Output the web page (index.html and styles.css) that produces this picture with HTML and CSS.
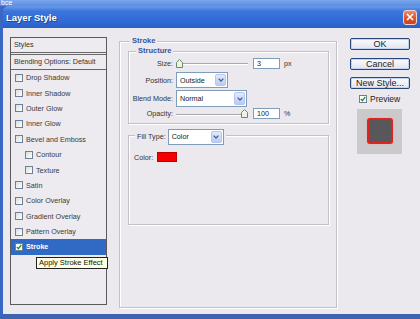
FILE: index.html
```html
<!DOCTYPE html>
<html lang="en">
<head>
    <meta charset="UTF-8">
    <title>Layer Style</title>
    <link rel="stylesheet" href="styles.css">
</head>
<body>
    <div class="desk">bce</div>
    <div class="window">
        <div class="titlebar">
            <span class="title">Layer Style</span>
            <span class="close">
                <svg width="8" height="8" viewBox="0 0 8 8"><path d="M1 1 L7 7 M7 1 L1 7" stroke="#fff" stroke-width="1.6"/></svg>
            </span>
        </div>
        <div class="client">
            <!-- styles list -->
            <div class="panel">
                <div class="panel-head">Styles</div>
                <div class="panel-blend">Blending Options: Default</div>
                <div class="item"><i class="cb"></i>Drop Shadow</div>
                <div class="item"><i class="cb"></i>Inner Shadow</div>
                <div class="item"><i class="cb"></i>Outer Glow</div>
                <div class="item"><i class="cb"></i>Inner Glow</div>
                <div class="item"><i class="cb"></i>Bevel and Emboss</div>
                <div class="item sub"><i class="cb"></i>Contour</div>
                <div class="item sub"><i class="cb"></i>Texture</div>
                <div class="item"><i class="cb"></i>Satin</div>
                <div class="item"><i class="cb"></i>Color Overlay</div>
                <div class="item"><i class="cb"></i>Gradient Overlay</div>
                <div class="item"><i class="cb"></i>Pattern Overlay</div>
                <div class="item active"><i class="cb checked"><svg width="6" height="6" viewBox="0 0 6 6"><path d="M0.8 3 L2.4 4.6 L5.2 1" fill="none" stroke="#1f9e2a" stroke-width="1.4"/></svg></i>Stroke</div>
                <div class="tooltip">Apply Stroke Effect</div>
            </div>

            <!-- stroke settings -->
            <div class="group stroke">
                <div class="group-title">Stroke</div>
                <div class="group structure">
                    <div class="group-title">Structure</div>
                    <div class="rows">
                        <div class="row row-size">
                            <span class="lbl">Size:</span>
                            <div class="slider">
                                <svg class="thumb" width="7" height="9" viewBox="0 0 7 9"><path d="M3.5 0.5 L6.5 3.5 V8.5 H0.5 V3.5 Z" fill="#eef3e6" stroke="#6d8a68"/></svg>
                            </div>
                            <div class="num">3</div>
                            <span class="unit">px</span>
                        </div>
                        <div class="row row-pos">
                            <span class="lbl">Position:</span>
                            <div class="select w-pos">
                                <span>Outside</span>
                                <i class="arrow"><svg width="6" height="4" viewBox="0 0 6 4"><path d="M0.6 0.6 L3 3 L5.4 0.6" fill="none" stroke="#4b5f86" stroke-width="1.3"/></svg></i>
                            </div>
                        </div>
                        <div class="row row-blend">
                            <span class="lbl">Blend Mode:</span>
                            <div class="select w-blend">
                                <span>Normal</span>
                                <i class="arrow"><svg width="6" height="4" viewBox="0 0 6 4"><path d="M0.6 0.6 L3 3 L5.4 0.6" fill="none" stroke="#4b5f86" stroke-width="1.3"/></svg></i>
                            </div>
                        </div>
                        <div class="row row-op">
                            <span class="lbl">Opacity:</span>
                            <div class="slider end">
                                <svg class="thumb" width="7" height="9" viewBox="0 0 7 9"><path d="M3.5 0.5 L6.5 3.5 V8.5 H0.5 V3.5 Z" fill="#eef3e6" stroke="#6d8a68"/></svg>
                            </div>
                            <div class="num">100</div>
                            <span class="unit">%</span>
                        </div>
                    </div>
                </div>

                <div class="group fill">
                    <div class="group-title fill-title">
                        <span>Fill Type:</span>
                        <div class="select w-fill">
                            <span>Color</span>
                            <i class="arrow"><svg width="6" height="4" viewBox="0 0 6 4"><path d="M0.6 0.6 L3 3 L5.4 0.6" fill="none" stroke="#4b5f86" stroke-width="1.3"/></svg></i>
                        </div>
                    </div>
                    <div class="color-row">
                        <span>Color:</span>
                        <i class="swatch"></i>
                    </div>
                </div>
            </div>

            <!-- buttons -->
            <div class="side">
                <div class="btn">OK</div>
                <div class="btn">Cancel</div>
                <div class="btn">New Style...</div>
                <div class="preview-check">
                    <i class="cb checked"><svg width="6" height="6" viewBox="0 0 6 6"><path d="M0.8 3 L2.4 4.6 L5.2 1" fill="none" stroke="#1f9e2a" stroke-width="1.4"/></svg></i>
                    Preview
                </div>
                <div class="preview-box"><div class="preview-square"></div></div>
            </div>
        </div>
    </div>
</body>
</html>
```

FILE: styles.css
```css
body {
    margin: 0;
    width: 420px;
    height: 319px;
    overflow: hidden;
    background: #3f63ae;
    font-family: "Liberation Sans", Arial, sans-serif;
}

.desk {
    height: 6px;
    background: linear-gradient(#7aa6ec, #5a8ce2);
    color: #fff;
    font-size: 7px;
    line-height: 5px;
    padding-left: 1px;
    overflow: hidden;
}

.window {
    border-left: 3px solid #3a66c4;
    border-bottom: 5px solid #3f63ae;
}

.titlebar {
    height: 22px;
    display: flex;
    align-items: center;
    justify-content: space-between;
    padding: 0 3px;
    background: linear-gradient(#6a9be9 0%, #3a74dc 25%, #306bd6 70%, #2a5ec6 100%);
    border-top-left-radius: 5px;
}

.title {
    color: #fff;
    font-size: 9.5px;
    font-weight: bold;
    text-shadow: 1px 1px 0 #1d4590;
}

.close {
    width: 14px;
    height: 15px;
    box-sizing: border-box;
    border: 1px solid #f3d4c6;
    border-radius: 3px;
    background: linear-gradient(#ec8a6a, #d9532c 60%, #c9441f);
    display: flex;
    align-items: center;
    justify-content: center;
}

.client {
    height: 286px;
    display: flex;
    background: #ebe9ed;
    font-size: 7.2px;
    color: #333;
}

/* styles list */
.panel {
    position: relative;
    width: 97px;
    margin: 9px 0 9px 7px;
    box-sizing: border-box;
    border: 1px solid #5a5a5a;
    background: #edebef;
}

.panel-head {
    height: 14px;
    line-height: 14px;
    padding-left: 3px;
    border-bottom: 3px double #666;
}

.panel-blend {
    height: 14px;
    line-height: 14px;
    padding-left: 3px;
    border-bottom: 1px solid #666;
}

.item {
    height: 15.4px;
    display: flex;
    align-items: center;
    padding-left: 4px;
    color: #3a3a3a;
}

.item.sub {
    padding-left: 14px;
}

.item.active {
    background: #316ac5;
    color: #fff;
    font-weight: bold;
}

.cb {
    width: 8px;
    height: 8px;
    box-sizing: border-box;
    border: 1px solid #6e7f9a;
    background: linear-gradient(135deg, #dcdcd6, #fff);
    margin-right: 3px;
    display: flex;
    align-items: center;
    justify-content: center;
    flex-shrink: 0;
}

.cb.checked {
    background: #fff;
}

.tooltip {
    position: absolute;
    left: 25px;
    top: 219px;
    width: 72px;
    height: 12px;
    box-sizing: border-box;
    border: 1px solid #222;
    background: #ffffe1;
    color: #111;
    font-size: 7.5px;
    line-height: 10px;
    padding-left: 2px;
    white-space: nowrap;
}

/* group boxes */
.group {
    border: 1px solid #c3c1c7;
    box-shadow: inset 1px 1px 0 #fff, 1px 1px 0 #fff;
}

.group-title {
    width: max-content;
    margin: -6px 0 0 7px;
    padding: 0 2px;
    line-height: 10px;
    background: #ebe9ed;
    color: #3654a0;
    font-weight: bold;
    font-size: 7.5px;
}

.stroke {
    width: 218px;
    margin: 13px 0 6px 12px;
    box-sizing: border-box;
    padding: 0 7px 0 8px;
}

.stroke > .group-title {
    margin-left: 2px;
}

.structure {
    margin-top: 5px;
}

.rows {
    padding: 1px 0 4px;
}

.row {
    display: flex;
    align-items: center;
}

.lbl {
    width: 44px;
    text-align: right;
    margin-right: 3px;
    flex-shrink: 0;
}

.row-size { height: 12px; }
.row-pos { height: 16px; margin-top: 3px; }
.row-blend { height: 17px; margin-top: 2px; }
.row-op { height: 11px; margin-top: 1px; }

.slider {
    width: 72px;
    height: 10px;
    display: flex;
    align-items: center;
    background: linear-gradient(transparent 5px, #a9a8ae 5px, #a9a8ae 6px, #fff 6px, #fff 7px, transparent 7px);
}

.slider.end {
    justify-content: flex-end;
}

.num {
    width: 27px;
    height: 11px;
    box-sizing: border-box;
    margin-left: 5px;
    border: 1px solid #7f9db9;
    background: #fff;
    line-height: 9px;
    padding-left: 3px;
    color: #222;
}

.unit {
    margin-left: 4px;
}

.select {
    display: flex;
    height: 16px;
    box-sizing: border-box;
    border: 1px solid #7f9db9;
    background: #fff;
}

.row-blend .select {
    height: 17px;
}

.select span {
    flex: 1;
    padding-left: 3px;
    align-self: center;
    color: #222;
}

.w-pos { width: 52px; }
.w-blend { width: 71px; }
.w-fill { width: 56px; }

.arrow {
    width: 11px;
    margin: 1px;
    box-sizing: border-box;
    border: 1px solid #b4c6ef;
    border-radius: 2px;
    background: linear-gradient(#e2eafd, #b8cbf6);
    display: flex;
    align-items: center;
    justify-content: center;
}

.fill {
    height: 90px;
    box-sizing: border-box;
    margin-top: 11px;
}

.fill-title {
    display: flex;
    align-items: center;
    margin: -7px 0 0 6px;
    font-weight: normal;
    font-size: 7.2px;
    color: #333;
    line-height: 16px;
}

.fill-title .select {
    margin-left: 2px;
    font-weight: normal;
}

.color-row {
    display: flex;
    align-items: center;
    padding: 7px 0 0 5px;
}

.swatch {
    width: 20px;
    height: 10px;
    margin-left: 4px;
    background: #f50000;
    box-shadow: 0 0 0 1px #c00000 inset;
}

/* buttons */
.side {
    width: 60px;
    margin: 10px 0 0 13px;
}

.btn {
    height: 12px;
    margin-bottom: 7.5px;
    box-sizing: border-box;
    border: 1px solid #2a477c;
    border-radius: 2px;
    background: linear-gradient(#fbfbfe, #e4e4ee);
    box-shadow: inset 0 0 0 1px #c2d3f1;
    text-align: center;
    font-size: 9px;
    line-height: 10px;
    color: #222;
}

.preview-check {
    display: flex;
    align-items: center;
    height: 9px;
    margin: -2px 0 0 9px;
    font-size: 8.5px;
    color: #222;
}

.preview-box {
    width: 45px;
    height: 45px;
    margin: 5px 0 0 7px;
    background: #cacacd;
    display: flex;
    align-items: center;
    justify-content: center;
}

.preview-square {
    width: 26px;
    height: 26px;
    box-sizing: border-box;
    border: 2px solid #e3221f;
    border-radius: 3px;
    background: #58585b;
    box-shadow: 0 0 1px #f77;
}
```
